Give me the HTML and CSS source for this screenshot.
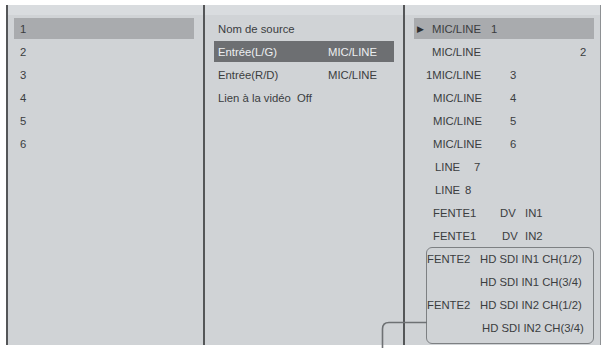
FILE: index.html
```html
<!DOCTYPE html>
<html>
<head>
<meta charset="utf-8">
<link rel="stylesheet" href="styles.css">
</head>
<body>
<div class="frame">
  <div class="col col-a">
    <div class="row sel"><span class="t">1</span></div>
    <div class="row"><span class="t">2</span></div>
    <div class="row"><span class="t">3</span></div>
    <div class="row"><span class="t">4</span></div>
    <div class="row"><span class="t">5</span></div>
    <div class="row"><span class="t">6</span></div>
  </div>
  <div class="col col-b">
    <div class="row"><span class="lbl">Nom de source</span></div>
    <div class="row dark"><span class="lbl">Entrée(L/G)</span><span>MIC/LINE</span></div>
    <div class="row"><span class="lbl">Entrée(R/D)</span><span>MIC/LINE</span></div>
    <div class="row"><span class="lbl2">Lien à la vidéo</span><span>Off</span></div>
  </div>
  <div class="col col-c">
    <div class="row sel p3"><span class="arrow">&#9654;</span><span class="w59">MIC/LINE</span><span>1</span></div>
    <div class="row p18"><span class="w148">MIC/LINE</span><span>2</span></div>
    <div class="row p12"><span class="w84">1MIC/LINE</span><span>3</span></div>
    <div class="row p19"><span class="w77">MIC/LINE</span><span>4</span></div>
    <div class="row p19"><span class="w77">MIC/LINE</span><span>5</span></div>
    <div class="row p19"><span class="w77">MIC/LINE</span><span>6</span></div>
    <div class="row p21"><span class="w39">LINE</span><span>7</span></div>
    <div class="row p21"><span class="w30">LINE</span><span>8</span></div>
    <div class="row p19"><span class="w67">FENTE1</span><span class="w25">DV</span><span>IN1</span></div>
    <div class="row p19"><span class="w69">FENTE1</span><span class="w23">DV</span><span>IN2</span></div>
    <div class="row p13"><span class="w53">FENTE2</span><span>HD SDI IN1 CH(1/2)</span></div>
    <div class="row p66"><span>HD SDI IN1 CH(3/4)</span></div>
    <div class="row p13"><span class="w53">FENTE2</span><span>HD SDI IN2 CH(1/2)</span></div>
    <div class="row p68"><span>HD SDI IN2 CH(3/4)</span></div>
    <div class="group"></div>
  </div>
</div>
<svg class="connector" width="604" height="348" viewBox="0 0 604 348">
  <path d="M427 322.5 H389 Q382.5 322.5 382.5 329 V348" fill="none" stroke="#6e7174" stroke-width="1.6"/>
</svg>
</body>
</html>
```

FILE: styles.css
```css
html, body {
  margin: 0;
  padding: 0;
  background: #ffffff;
}

body {
  position: relative;
  width: 604px;
  height: 348px;
  overflow: hidden;
  font-family: "Liberation Sans", Arial, sans-serif;
  font-size: 11.3px;
  color: #3b3d3f;
}

.frame {
  display: flex;
  margin: 5px 3px 0 6px;
  height: 340px;
  background: #d0d3d6;
  border-left: 2px solid #545658;
  border-right: 1px solid #8e9194;
  box-sizing: border-box;
  box-shadow: inset 0 10px 0 #d9dcdf;
}

.col {
  position: relative;
  box-sizing: border-box;
  padding-top: 13px;
  display: flex;
  flex-direction: column;
  gap: 2px;
}

.col-a {
  width: 197px;
  border-right: 2px solid #545658;
  padding-left: 6px;
}

.col-b {
  width: 200px;
  border-right: 2px solid #545658;
  padding-left: 9px;
}

.col-c {
  width: 195px;
  padding-left: 9px;
}

.row {
  height: 21px;
  width: 180px;
  display: flex;
  align-items: center;
  white-space: nowrap;
  box-sizing: border-box;
}

.col-a .row {
  padding-left: 6px;
}

.col-b .row {
  padding-left: 4px;
}

.sel {
  background: #a9abae;
}

.dark {
  background: #6d6f72;
  color: #eceef0;
}

.lbl {
  display: inline-block;
  width: 110px;
}

.lbl2 {
  display: inline-block;
  width: 79px;
}

.arrow {
  display: inline-block;
  width: 15px;
  font-size: 9px;
  color: #2d2f31;
}

.p3 { padding-left: 3px; }
.p12 { padding-left: 12px; }
.p13 { padding-left: 13px; }
.p18 { padding-left: 18px; }
.p19 { padding-left: 19px; }
.p21 { padding-left: 21px; }
.p66 { padding-left: 66px; }
.p68 { padding-left: 68px; }

.w23 { display: inline-block; width: 23px; }
.w25 { display: inline-block; width: 25px; }
.w30 { display: inline-block; width: 30px; }
.w39 { display: inline-block; width: 39px; }
.w53 { display: inline-block; width: 53px; }
.w59 { display: inline-block; width: 59px; }
.w67 { display: inline-block; width: 67px; }
.w69 { display: inline-block; width: 69px; }
.w77 { display: inline-block; width: 77px; }
.w84 { display: inline-block; width: 84px; }
.w148 { display: inline-block; width: 148px; }

.group {
  position: absolute;
  left: 21px;
  top: 242px;
  width: 168px;
  height: 97px;
  border: 1.6px solid #7d8083;
  border-radius: 6px;
  box-sizing: border-box;
}

.connector {
  position: absolute;
  left: 0;
  top: 0;
  pointer-events: none;
}
```
